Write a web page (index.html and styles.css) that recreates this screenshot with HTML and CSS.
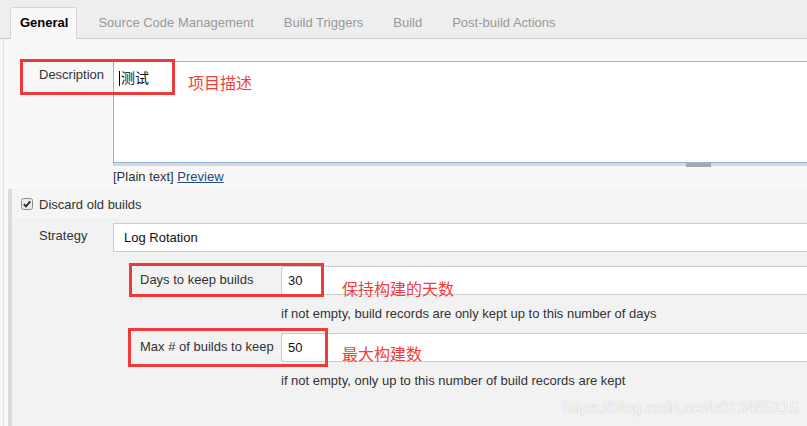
FILE: index.html
```html
<!DOCTYPE html>
<html lang="en">
<head>
  <meta charset="UTF-8" />
  <title>General - Configure</title>
  <link rel="stylesheet" href="styles.css">
</head>
<body>
  <div class="page">
    <div class="tabs">
      <span class="tab active">General</span>
      <span class="tab">Source Code Management</span>
      <span class="tab">Build Triggers</span>
      <span class="tab">Build</span>
      <span class="tab">Post-build Actions</span>
    </div>

    <div class="config">
      <div class="desc-row">
        <label class="row-label">Description</label>
        <div class="row-field">
          <div class="textarea"><span class="caret"></span>测试</div>
          <div class="grip-bar"><span class="grip"></span></div>
          <div class="preview-links">[Plain text] <a href="#">Preview</a></div>
        </div>
        <div class="mark mark-desc"></div>
        <span class="note note-desc">项目描述</span>
      </div>

      <div class="section">
        <div class="section-head">
          <svg class="checkbox" width="12" height="12" viewBox="0 0 12 12">
            <rect x="0.5" y="0.5" width="11" height="11" rx="2" fill="#ececec" stroke="#8c8c8c"/>
            <path d="M2.8 6.1 5 8.4 9.2 3.4" fill="none" stroke="#2a2a2a" stroke-width="1.8"/>
          </svg>
          <span>Discard old builds</span>
        </div>

        <div class="section-body">
          <div class="strategy-row">
            <label class="row-label">Strategy</label>
            <div class="select">Log Rotation</div>
          </div>

          <div class="sub-row">
            <label class="sub-label">Days to keep builds</label>
            <div class="sub-field">
              <div class="input">30</div>
              <div class="help">if not empty, build records are only kept up to this number of days</div>
            </div>
            <div class="mark mark-days"></div>
            <span class="note note-days">保持构建的天数</span>
          </div>

          <div class="sub-row">
            <label class="sub-label">Max # of builds to keep</label>
            <div class="sub-field">
              <div class="input">50</div>
              <div class="help">if not empty, only up to this number of build records are kept</div>
            </div>
            <div class="mark mark-max"></div>
            <span class="note note-max">最大构建数</span>
          </div>
        </div>
      </div>
    </div>

    <div class="watermark">https://blog.csdn.net/u013465115</div>
  </div>
</body>
</html>
```

FILE: styles.css
```css
html,
body {
  margin: 0;
  overflow: hidden;
}

body {
  font-family: "Liberation Sans", Arial, "Noto Sans CJK SC", sans-serif;
  font-size: 13px;
  line-height: 16px;
  color: #333;
  background-color: #f8f8f8;
}

.page {
  position: relative;
  height: 426px;
  overflow: hidden;
}

/* tab bar */

.tabs {
  display: flex;
  align-items: flex-end;
  height: 38px;
  padding-left: 10px;
  background-color: #eee;
  border-bottom: 1px solid #c9c9c9;
}

.tab {
  padding: 0 15px;
  line-height: 30px;
  margin-bottom: 0;
  color: #999;
}

.tab.active {
  height: 31px;
  line-height: 30px;
  padding: 0 8px 0 9px;
  margin: 0 6px -1px 0;
  font-weight: bold;
  color: #000;
  background-color: #f8f8f8;
  border: 1px solid #d6d6d6;
  border-bottom: none;
  border-radius: 3px 3px 0 0;
}

/* form */

.config {
  margin-left: 3px;
  border-left: 1px solid #e2e2e2;
}

.desc-row {
  position: relative;
  display: flex;
  padding: 22px 0 0 35px;
}

.row-label {
  flex: none;
  width: 74px;
  padding-top: 6px;
}

.row-field {
  flex: 1;
}

.textarea {
  height: 90px;
  padding: 6px 5px 4px;
  border: 1px solid #8fb3ea;
  border-right: none;
  background-color: #fff;
  color: #111;
  font-family: "Noto Sans CJK SC", sans-serif;
  font-size: 14px;
  line-height: 18px;
}

.caret {
  display: inline-block;
  width: 1px;
  height: 15px;
  margin-right: 1px;
  background-color: #000;
  vertical-align: -3px;
}

.grip-bar {
  height: 3px;
  margin-top: 1px;
  background-color: #d8d8d8;
}

.grip {
  display: block;
  width: 25px;
  height: 4px;
  margin: -1px 0 0 573px;
  background-color: #a8a8a8;
}

.preview-links {
  margin-top: 3px;
}

.preview-links a {
  color: #204a87;
}

.section {
  margin: 4px 0 0 4px;
  border-left: 4px solid #dcdcdc;
}

.section-head {
  display: flex;
  align-items: center;
  height: 28px;
  padding: 2px 0 0 9px;
  background-color: #f5f5f5;
}

.checkbox {
  margin: -2px 6px 0 0;
}

.section-body {
  padding: 3px 0 40px;
  background-color: #f2f2f2;
  border-top: 1px solid #ececec;
}

.strategy-row {
  display: flex;
  padding-left: 27px;
}

.strategy-row .row-label {
  padding-top: 5px;
}

.select {
  flex: 1;
  height: 27px;
  line-height: 27px;
  padding-left: 10px;
  background-color: #fff;
  border: 1px solid #ccc;
  border-right: none;
  color: #111;
}

.sub-row {
  position: relative;
  display: flex;
  padding-left: 128px;
}

.strategy-row + .sub-row {
  margin-top: 14px;
}

.sub-label {
  flex: none;
  width: 141px;
  padding-top: 6px;
}

.sub-field {
  flex: 1;
}

.input {
  height: 27px;
  line-height: 27px;
  padding-left: 6px;
  background-color: #fff;
  border: 1px solid #ccc;
  border-right: none;
  border-radius: 3px 0 0 3px;
  color: #111;
}

.help {
  padding: 11px 0;
}

/* red annotations drawn over the form */

.mark {
  position: absolute;
  border: 3px solid #f03a3a;
}

.mark-desc {
  top: 20px;
  left: 16px;
  width: 149px;
  height: 30px;
}

.mark-days {
  top: -3px;
  left: 117px;
  width: 189px;
  height: 28px;
}

.mark-max {
  top: -5px;
  left: 116px;
  width: 194px;
  height: 33px;
}

.note {
  position: absolute;
  font-family: "Noto Sans CJK SC", sans-serif;
  font-size: 16px;
  line-height: 24px;
  color: #f23c3c;
}

.note-desc {
  top: 31px;
  left: 184px;
}

.note-days {
  top: 10px;
  left: 330px;
}

.note-max {
  top: 8px;
  left: 330px;
}

.watermark {
  position: absolute;
  top: 399px;
  left: 563px;
  font-size: 16px;
  line-height: 18px;
  color: #f8f8f8;
  text-shadow: 0 0 1px #b0b0b0;
}
```
